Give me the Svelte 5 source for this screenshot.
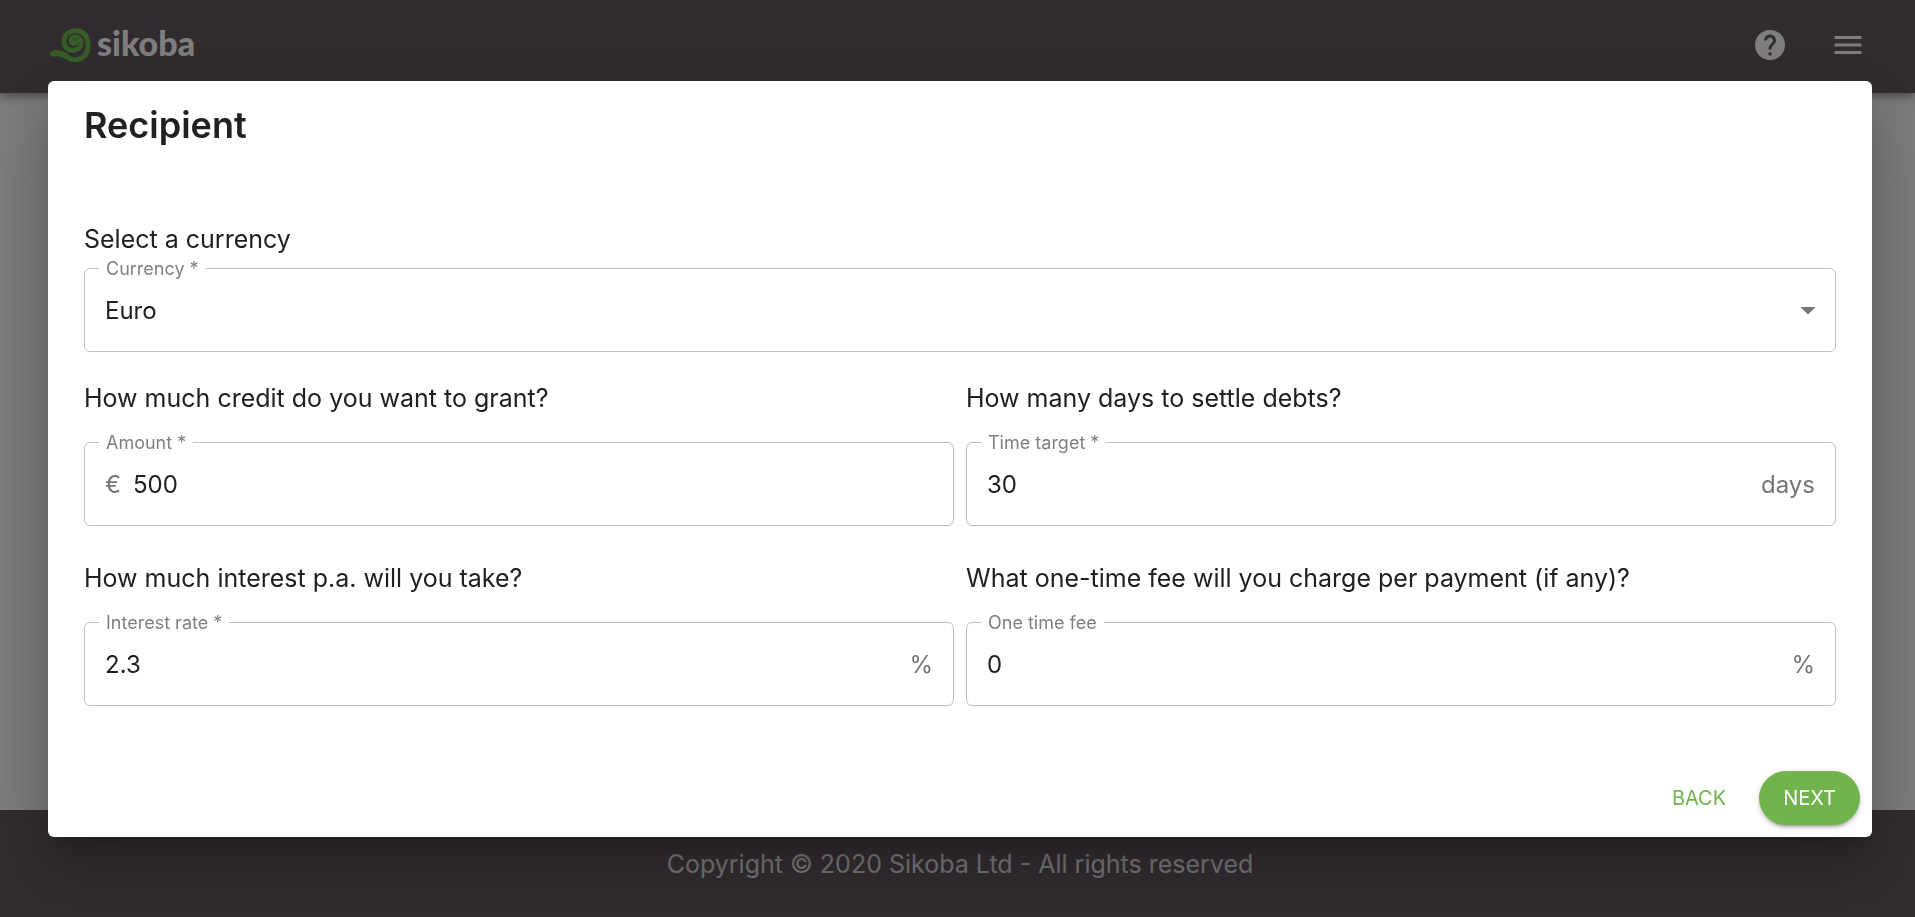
<script lang="ts">
  let currency = $state('Euro');
  let amount = $state('500');
  let days = $state('30');
  let rate = $state('2.3');
  let fee = $state('0');
</script>

<div class="page">
  <header>
    <a class="brand" href="#home">
      <svg class="mark" viewBox="0 0 150 132" aria-hidden="true">
        <path class="tail" d="M21 92C36 86 46 90 60 99" />
        <path d="M24 91C40 87 50 94 62 102C78 112 96 113 110 103C125 92 129 72 125 53C121 33 106 22 87 23C67 24 54 38 54 55C54 72 66 82 81 82C96 82 105 72 105 60C105 48 96 41 86 42C77 43 73 50 76 56C79 61 84 62 89 59" />
      </svg>
      <span>sikoba</span>
    </a>
    <nav>
      <button class="icon" aria-label="Help">
        <svg viewBox="0 0 24 24"><path d="M12 2C6.480 2 2 6.480 2 12s4.480 10 10 10 10-4.480 10-10S17.520 2 12 2zm1 17h-2v-2h2v2zm2.070-7.750l-.9.920C13.450 12.900 13 13.500 13 15h-2v-.5c0-1.100.45-2.100 1.170-2.830l1.240-1.260c.37-.36.59-.86.59-1.410 0-1.100-.9-2-2-2s-2 .9-2 2H8c0-2.210 1.790-4 4-4s4 1.790 4 4c0 .88-.36 1.680-.93 2.250z" /></svg>
      </button>
      <button class="icon" aria-label="Menu">
        <svg viewBox="0 0 24 24"><path d="M3 18h18v-2H3v2zm0-5h18v-2H3v2zm0-7v2h18V6H3z" /></svg>
      </button>
    </nav>
  </header>
  <main></main>
  <footer>Copyright © 2020 Sikoba Ltd - All rights reserved</footer>
</div>

<div class="backdrop">
  <div class="dialog" role="dialog" aria-modal="true" aria-labelledby="title">
    <h2 id="title">Recipient</h2>
    <form onsubmit={(e) => e.preventDefault()}>
      <section class="wide">
        <p>Select a currency</p>
        <fieldset>
          <legend><label for="currency">Currency *</label></legend>
          <div class="row pick">
            <select id="currency" bind:value={currency}>
              <option>Euro</option>
            </select>
            <svg class="caret" viewBox="0 0 24 24" aria-hidden="true"><path d="M7 10l5 5 5-5z" /></svg>
          </div>
        </fieldset>
      </section>
      <div class="pair">
        <section>
          <p>How much credit do you want to grant?</p>
          <fieldset>
            <legend><label for="amount">Amount *</label></legend>
            <div class="row"><span>€</span><input id="amount" bind:value={amount} /></div>
          </fieldset>
        </section>
        <section>
          <p>How many days to settle debts?</p>
          <fieldset>
            <legend><label for="days">Time target *</label></legend>
            <div class="row"><input id="days" bind:value={days} /><span>days</span></div>
          </fieldset>
        </section>
        <section>
          <p>How much interest p.a. will you take?</p>
          <fieldset>
            <legend><label for="rate">Interest rate *</label></legend>
            <div class="row"><input id="rate" bind:value={rate} /><span>%</span></div>
          </fieldset>
        </section>
        <section>
          <p>What one-time fee will you charge per payment (if any)?</p>
          <fieldset>
            <legend><label for="fee">One time fee</label></legend>
            <div class="row"><input id="fee" bind:value={fee} /><span>%</span></div>
          </fieldset>
        </section>
      </div>
    </form>
    <div class="actions">
      <button class="back">BACK</button>
      <button class="next">NEXT</button>
    </div>
  </div>
</div>

<style>
  :global(body) {
    margin: 0;
  }
  .page,
  .backdrop {
    box-sizing: border-box;
    font-family: Inter, sans-serif;
    font-size: 24px;
    color: #212121;
  }
  .page {
    min-height: 100vh;
    display: flex;
    flex-direction: column;
    background: #fafafa;
  }
  header {
    position: relative;
    display: flex;
    align-items: center;
    justify-content: space-between;
    height: 90px;
    padding: 0 49px 3px 46px;
    background: #62575f;
    box-shadow: 0 3px 6px -1px rgba(0, 0, 0, 0.2), 0 6px 8px rgba(0, 0, 0, 0.14), 0 2px 15px rgba(0, 0, 0, 0.12);
  }
  .brand {
    display: flex;
    align-items: center;
    text-decoration: none;
    color: #fff;
    font-family: Lato, sans-serif;
    font-size: 34px;
    line-height: 40px;
    font-weight: 900;
  }
  .brand span {
    padding: 0 0 4px 1px;
  }
  .mark {
    width: 50px;
    height: 44px;
    fill: none;
    stroke: #6dbb52;
    stroke-width: 15;
    stroke-linecap: round;
  }
  .tail {
    stroke-width: 18;
  }
  nav {
    display: flex;
    gap: 42px;
  }
  button {
    border: 0;
    padding: 0;
    background: none;
    font: inherit;
    cursor: pointer;
  }
  .icon svg {
    display: block;
    width: 36px;
    height: 36px;
    fill: #fff;
  }
  main {
    flex: 1;
  }
  footer {
    padding: 36px 43px 35px 48px;
    font-size: 25px;
    line-height: 36px;
    text-align: center;
    background: #62575f;
    color: #e8e8e8;
  }
  .backdrop {
    position: fixed;
    inset: 0;
    z-index: 10;
    display: flex;
    align-items: center;
    padding: 0 43px 0 48px;
    background: rgba(0, 0, 0, 0.5);
    overflow: auto;
  }
  .dialog {
    flex: 1;
    background: #fff;
    border-radius: 6px;
    box-shadow: 0 16px 22px -10px rgba(0, 0, 0, 0.2), 0 36px 57px 4px rgba(0, 0, 0, 0.14), 0 14px 69px 12px rgba(0, 0, 0, 0.12);
  }
  h2 {
    margin: 0;
    padding: 20px 36px 72px;
    font-size: 36px;
    line-height: 48px;
    font-weight: 600;
  }
  form {
    padding: 0 36px;
  }
  p {
    margin: 0 0 17px;
    font-size: 25px;
    line-height: 36px;
  }
  .wide p {
    margin-bottom: 2px;
  }
  .pair {
    display: grid;
    grid-template-columns: 1fr 1fr;
    gap: 34px 12px;
    margin-top: 28px;
  }
  fieldset {
    margin: 0;
    padding: 0 14px 9px;
    min-width: 0;
    border: 1px solid #bfbfbf;
    border-radius: 6px;
  }
  legend {
    padding: 0 7px;
    line-height: 20px;
    font-size: 18px;
    color: #808080;
  }
  legend label {
    display: block;
  }
  .row {
    display: flex;
    align-items: center;
    gap: 12px;
    height: 63px;
    padding: 0 6px;
    color: #757575;
  }
  .pick {
    position: relative;
  }
  input,
  select {
    flex: 1;
    min-width: 0;
    height: 36px;
    padding: 0;
    border: 0;
    outline: 0;
    background: none;
    appearance: none;
    font: inherit;
    color: #212121;
  }
  .caret {
    position: absolute;
    right: -5px;
    width: 36px;
    height: 36px;
    fill: #757575;
    pointer-events: none;
  }
  .actions {
    display: flex;
    justify-content: flex-end;
    gap: 9px;
    padding: 65px 12px 12px;
    font-size: 20px;
  }
  .actions button {
    height: 54px;
    padding: 0 24px;
    border-radius: 27px;
  }
  .back {
    color: #71b44c;
  }
  .next {
    color: #fff;
    background: #71b44c;
    box-shadow: 0 4px 2px -3px rgba(0, 0, 0, 0.2), 0 3px 3px rgba(0, 0, 0, 0.14), 0 2px 7px rgba(0, 0, 0, 0.12);
  }
</style>
